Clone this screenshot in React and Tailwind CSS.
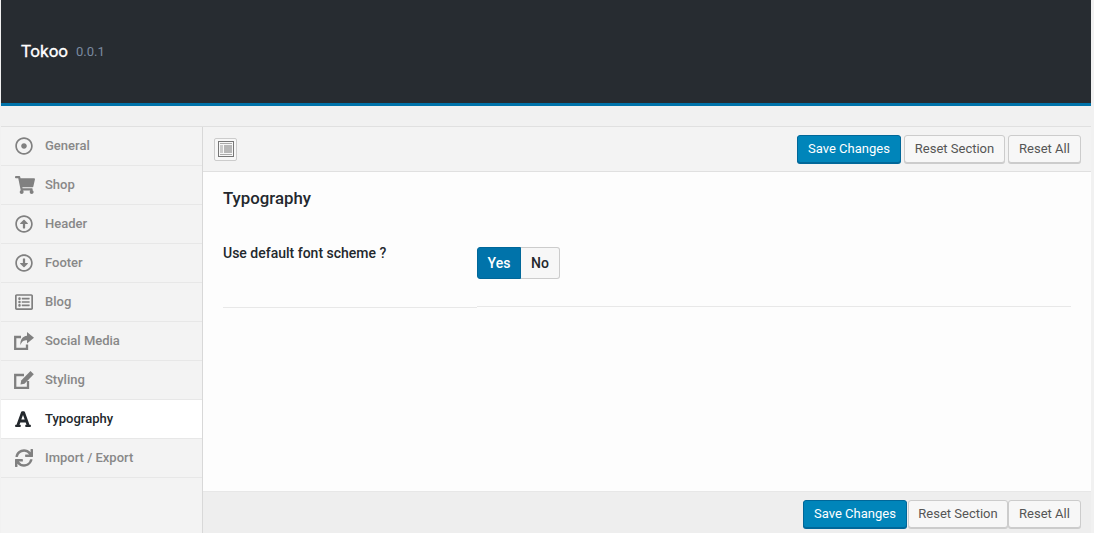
import React from "react";
import { FaRegDotCircle, FaShoppingCart, FaRegArrowAltCircleUp, FaRegArrowAltCircleDown, FaRegListAlt, FaFont, FaSync } from "react-icons/fa";

function ShareIcon() {
  return (
    <svg width="20" height="18" viewBox="0 0 20 18" fill="none">
      <path d="M7 5H1.200v11.800H13V12.500" stroke="currentColor" strokeWidth="2.300" />
      <path d="M13 0l7 5.700-7 5.800V8.200c-3.200 0-5.500 1.300-6.500 5-.6-5.500 2-9 6.500-9.500z" fill="currentColor" />
    </svg>
  );
}

function EditIcon() {
  return (
    <svg width="20" height="18" viewBox="0 0 20 18" fill="none">
      <path d="M10 4H1.200v12.800H14V10" stroke="currentColor" strokeWidth="2.300" />
      <path d="M16.500 0l3.300 3.300-9.300 9.500-4 .8.700-4.100z" fill="currentColor" />
    </svg>
  );
}

const items = [
  ["General", <FaRegDotCircle size={18} />],
  ["Shop", <FaShoppingCart size={20} className="ml-[2px]" />],
  ["Header", <FaRegArrowAltCircleUp size={18} />],
  ["Footer", <FaRegArrowAltCircleDown size={18} />],
  ["Blog", <FaRegListAlt size={18} />],
  ["Social Media", <ShareIcon />],
  ["Styling", <EditIcon />],
  ["Typography", <FaFont size={18} className="mr-[2px]" />],
  ["Import / Export", <FaSync size={18} />],
];

function Btn({ children, className = "" }) {
  return (
    <button className={`h-[28px] rounded-[3px] border border-[#cccccc] bg-[#f7f7f7] text-[13px] text-[#555555] shadow-[0_1px_0_#cccccc] ${className}`}>
      {children}
    </button>
  );
}

function Primary({ children, className = "" }) {
  return (
    <button className={`h-[28px] rounded-[3px] border border-[#006799] bg-[#0085ba] text-[13px] text-white shadow-[0_1px_0_#006799] ${className}`}>
      {children}
    </button>
  );
}

export default function App() {
  return (
    <div className="h-[533px] w-[1094px] overflow-hidden bg-[#f1f1f1] pl-px pr-[3px] font-['Roboto',sans-serif]">
      <header className="flex h-[106px] items-center border-b-[3px] border-[#0073aa] bg-[#272c31] pl-5">
        <span className="text-[17px] font-normal text-white [-webkit-text-stroke:0.3px_white]">Tokoo</span>
        <span className="ml-2 mt-px text-[13px] text-[#7a8aa0]">0.0.1</span>
      </header>
      <div className="mt-5 flex h-[407px] border-t border-[#e0e0e0]">
        <nav className="w-[202px] shrink-0 border-r border-[#d8d8d8] bg-[#f3f3f3]">
          {items.map(([label, icon]) => {
            const active = label === "Typography";
            return (
              <div key={label} className={`flex h-[39px] items-center border-b border-[#e7e7e7] ${active ? "bg-white text-[#23282d]" : "text-[#808080]"}`}>
                <span className="flex w-11 shrink-0 justify-center pl-[3px] pr-[1px]">{icon}</span>
                <span className={`text-[13px] font-medium ${active ? "text-[#23282d]" : "text-[#888888]"}`}>{label}</span>
              </div>
            );
          })}
        </nav>
        <main className="flex min-w-0 flex-1 flex-col bg-white">
          <div className="flex h-[45px] items-center justify-between border-b border-[#e0e0e0] bg-[#f3f3f3] pl-[11px] pr-[10px]">
            <span className="flex h-[23px] w-[23px] items-center justify-center rounded-[2px] border border-[#cccccc] bg-[#f7f7f7] text-[#777777]">
              <svg width="16" height="16" viewBox="0 0 16 16" fill="none">
                <rect x="0.500" y="0.500" width="15" height="15" stroke="currentColor" />
                <rect x="2" y="2" width="12" height="1" fill="currentColor" opacity="0.6" />
                <rect x="2" y="4" width="3" height="8" fill="currentColor" opacity="0.35" />
                <rect x="6" y="4" width="8" height="8" fill="currentColor" opacity="0.5" />
                <rect x="2" y="13" width="12" height="1" fill="currentColor" opacity="0.6" />
              </svg>
            </span>
            <div className="flex">
              <Primary className="w-[104px]">Save Changes</Primary>
              <Btn className="ml-[3px] w-[101px]">Reset Section</Btn>
              <Btn className="ml-[3px] w-[73px]">Reset All</Btn>
            </div>
          </div>
          <div className="flex-1 bg-[#fdfdfd] pl-5 pr-5">
            <h2 className="mt-[16px] text-[16.800px] font-medium leading-5 text-[#23282d]">Typography</h2>
            <div className="mt-[24px] flex">
              <div className="h-[76px] w-[254px] shrink-0 border-b border-[#e8e8e8] pt-[11px] text-[14px] leading-[20px] font-medium text-[#23282d]">Use default font scheme ?</div>
              <div className="h-[75px] flex-1 border-b border-[#e8e8e8] pt-[15px]">
                <div className="flex h-[32px] w-[83px] text-[14px] font-medium">
                  <span className="flex w-[44px] items-center justify-center rounded-l-[3px] border border-[#006799] bg-[#0073aa] text-white">Yes</span>
                  <span className="flex flex-1 items-center justify-center rounded-r-[3px] border border-l-0 border-[#cccccc] bg-[#f7f7f7] text-[#23282d]">No</span>
                </div>
              </div>
            </div>
          </div>
          <div className="flex h-[42px] shrink-0 items-start justify-end border-t border-[#e7e7e7] bg-[#eeeeee] pr-[10px] pt-2">
            <Primary className="w-[104px]">Save Changes</Primary>
            <Btn className="ml-px w-[100px]">Reset Section</Btn>
            <Btn className="w-[73px]">Reset All</Btn>
          </div>
        </main>
      </div>
    </div>
  );
}
